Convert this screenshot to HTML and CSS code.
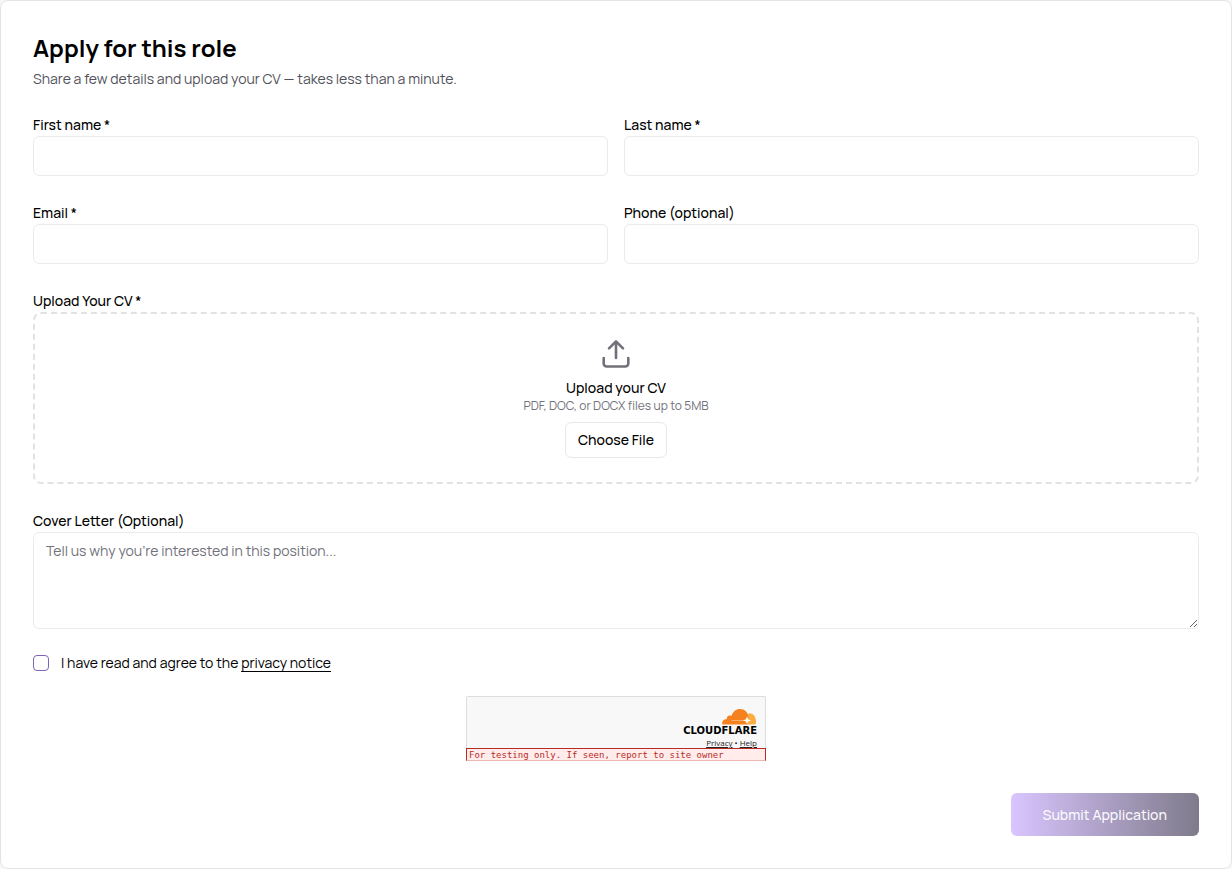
FILE: index.html
```html
<!DOCTYPE html>
<html lang="en">
<head>
<meta charset="utf-8">
<meta name="viewport" content="width=device-width, initial-scale=1">
<title>Apply for this role</title>
<link rel="stylesheet" href="styles.css">
</head>
<body>
<main class="card">
  <header>
    <h1 class="title">Apply for this role</h1>
    <p class="subtitle">Share a few details and upload your CV — takes less than a minute.</p>
  </header>
  <form class="form">
    <div class="row">
      <div class="field"><label class="label" for="first">First name *</label><input class="input" id="first" type="text"></div>
      <div class="field"><label class="label" for="last">Last name *</label><input class="input" id="last" type="text"></div>
    </div>
    <div class="row">
      <div class="field"><label class="label" for="email">Email *</label><input class="input" id="email" type="email"></div>
      <div class="field"><label class="label" for="phone">Phone (optional)</label><input class="input" id="phone" type="tel"></div>
    </div>
    <div class="field">
      <label class="label" for="choose">Upload Your CV *</label>
      <div class="dropzone">
        <svg class="upload-icon" viewBox="0 0 32 32" fill="none" stroke="currentColor" stroke-width="2.600" stroke-linecap="round" stroke-linejoin="round" aria-hidden="true"><path d="M16 20V3.500M9 10.300l7-7 7 7M3.700 20v5.500a3 3 0 0 0 3 3h18.600a3 3 0 0 0 3-3V20"/></svg>
        <p class="drop-title">Upload your CV</p>
        <p class="drop-hint">PDF, DOC, or DOCX files up to 5MB</p>
        <button class="choose" id="choose" type="button">Choose File</button>
      </div>
    </div>
    <div class="field">
      <label class="label" for="cover">Cover Letter (Optional)</label>
      <textarea class="input area" id="cover" placeholder="Tell us why you’re interested in this position..."></textarea>
    </div>
    <div class="consent">
      <input class="check" id="agree" type="checkbox">
      <label for="agree">I have read and agree to the <a class="notice" href="#privacy">privacy notice</a></label>
    </div>
    <div class="captcha">
      <div class="captcha-brand">
        <svg class="cloud" viewBox="0 0 36 17" aria-hidden="true">
          <path fill="#fbad41" d="M26 16.500c0-5 0-11.500 3-12C33 4.500 36 8 36 13v2q0 1.500-1.500 1.500z"/>
          <path fill="#f6821f" d="M1 16.500q-1 0-1-1c0-3 2-4.800 5-5C4.700 7.500 7.500 6 10 7.400 11.500 2.500 15 0 19 0c5 0 8.400 3.300 9 8l-1 8.500z"/>
          <path fill="#fff" d="M26.500 8l1.200 2.900 3 1.200-3 1.200-1.200 3-1.200-3-3-1.200 3-1.200z"/>
          <path fill="#fff" fill-opacity=".5" d="M10 11.800h15v.8H10z"/>
        </svg>
        <span class="wordmark">CLOUDFLARE</span>
        <span class="captcha-links"><a href="#p">Privacy</a> • <a href="#h">Help</a></span>
      </div>
      <div class="captcha-warning">For testing only. If seen, report to site owner</div>
    </div>
    <button class="submit" type="submit">Submit Application</button>
  </form>
</main>
</body>
</html>
```
FILE: styles.css
```css
* { box-sizing: border-box; }
body {
  margin: 0;
  background: #f8f8fa;
  color: #000;
  font: 400 14px/20px Manrope, Inter, sans-serif;
}
h1, p { margin: 0; }
button, input, textarea { font: inherit; color: inherit; }
.card {
  padding: 32px;
  border: 1px solid #e4e4e7;
  border-radius: 8px;
  background: #fff;
}
.title { font-size: 24px; line-height: 30px; font-weight: 700; }
.subtitle { margin-top: 6px; color: #52525b; }
.form { display: flex; flex-direction: column; gap: 24px; margin-top: 23px; }
.row { display: grid; grid-template-columns: 1fr 1fr; gap: 16px; }
.field { display: flex; flex-direction: column; }
.label { padding-top: 2px; line-height: 22px; font-weight: 500; }
.input {
  width: 100%;
  height: 40px;
  padding: 8px 12px;
  border: 1px solid #ebebed;
  border-radius: 6px;
  background: #fff;
}
.area { display: block; height: 97px; resize: vertical; }
.area::placeholder { color: #71717a; opacity: 1; }
.dropzone {
  display: flex;
  flex-direction: column;
  align-items: center;
  padding: 24px;
  border: 2px dashed #e2e2e4;
  border-radius: 8px;
}
.upload-icon { width: 32px; height: 32px; margin-bottom: 8px; color: #71717a; }
.drop-title { font-weight: 500; }
.drop-hint { font-size: 12px; line-height: 16px; color: #71717a; }
.choose {
  height: 36px;
  margin-top: 8px;
  padding: 0 12px;
  border: 1px solid #e8e8eb;
  border-radius: 6px;
  background: #fff;
  font-weight: 500;
}
.consent { display: flex; align-items: center; gap: 12px; line-height: 19px; }
.check {
  appearance: none;
  width: 16px;
  height: 16px;
  margin: 0;
  border: 1px solid #7f63b5;
  border-radius: 4px;
  background: #fff;
}
.notice { color: inherit; text-underline-offset: 3px; }
.captcha {
  display: flex;
  flex-direction: column;
  align-self: center;
  width: 300px;
}
.captcha-brand {
  display: flex;
  flex-direction: column;
  align-items: flex-end;
  height: 52px;
  padding: 12px 8px 0;
  border: 1px solid #dedede;
  border-bottom: 0;
  border-radius: 2px 2px 0 0;
  background: #f8f8f8;
}
.cloud { width: 36px; height: 17px; }
.wordmark { margin-top: 1px; font: 900 10px/10px "DejaVu Sans", sans-serif; color: #000; }
.captcha-links { margin-top: 2px; font: 8px/10px "Open Sans", sans-serif; color: #232323; }
.captcha-links a { color: inherit; }
.captcha-warning {
  height: 13px;
  padding: 0 2px;
  border: 1px solid #b92b27;
  border-bottom-color: #edb6b3;
  background: #ffeceb;
  color: #b92b27;
  font: 9px/12px "DejaVu Sans Mono", monospace;
}
.submit {
  align-self: flex-end;
  height: 43px;
  margin-top: 8px;
  padding: 0 32px;
  border: 0;
  border-radius: 6px;
  background: linear-gradient(90deg, #d9c5ff, #7f7b8b);
  color: #faf8fd;
  font-weight: 500;
}
```
